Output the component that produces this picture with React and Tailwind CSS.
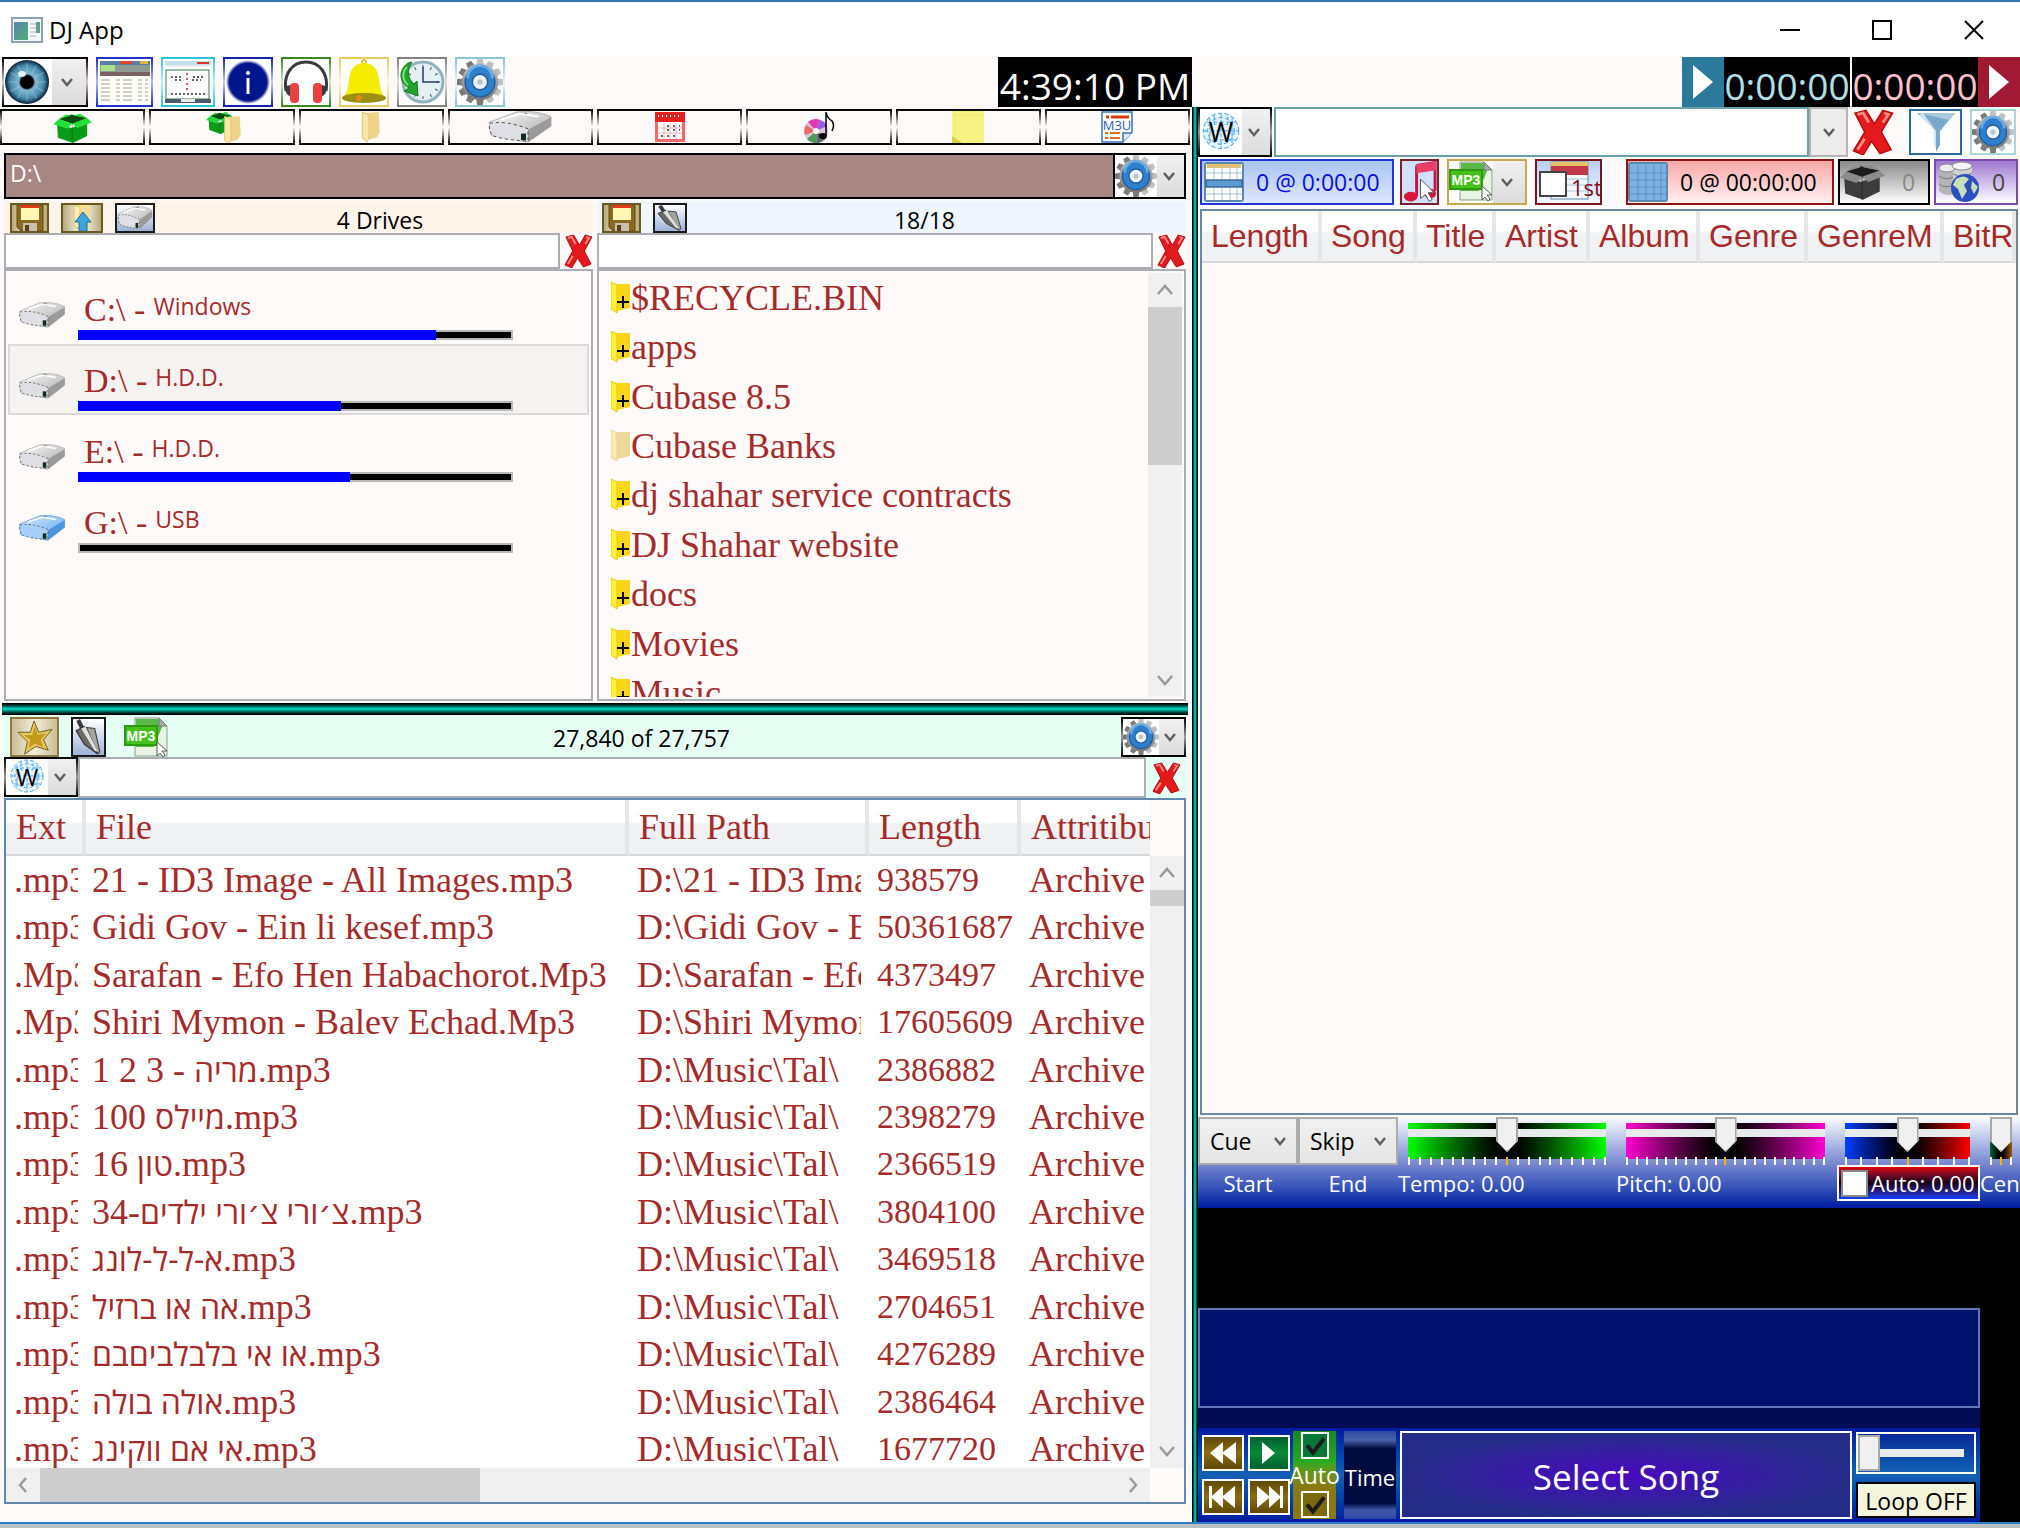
import React from "react";
import { useState } from "react";

const drives = [
  { letter: "C:\\", name: "Windows", used: 83 },
  { letter: "D:\\", name: "H.D.D.", used: 61, selected: true },
  { letter: "E:\\", name: "H.D.D.", used: 63 },
  { letter: "G:\\", name: "USB", used: 0, usb: true },
];

const folders = [
  { name: "$RECYCLE.BIN", more: true },
  { name: "apps", more: true },
  { name: "Cubase 8.5", more: true },
  { name: "Cubase Banks", more: false },
  { name: "dj shahar service contracts", more: true },
  { name: "DJ Shahar website", more: true },
  { name: "docs", more: true },
  { name: "Movies", more: true },
  { name: "Music", more: true },
];

const files = [
  [".mp3", "21 - ID3 Image - All Images.mp3", "D:\\21 - ID3 Image - All Images.mp3", "938579"],
  [".mp3", "Gidi Gov - Ein li kesef.mp3", "D:\\Gidi Gov - Ein li kesef.mp3", "50361687"],
  [".Mp3", "Sarafan - Efo Hen Habachorot.Mp3", "D:\\Sarafan - Efo Hen Habachorot.Mp3", "4373497"],
  [".Mp3", "Shiri Mymon - Balev Echad.Mp3", "D:\\Shiri Mymon - Balev Echad.Mp3", "17605609"],
  [".mp3", "1 2 3 - מריה.mp3", "D:\\Music\\Tal\\", "2386882"],
  [".mp3", "100 מיילס.mp3", "D:\\Music\\Tal\\", "2398279"],
  [".mp3", "16 טון.mp3", "D:\\Music\\Tal\\", "2366519"],
  [".mp3", "34-צ׳ורי צ׳ורי ילדים.mp3", "D:\\Music\\Tal\\", "3804100"],
  [".mp3", "א-ל-ל-לונג.mp3", "D:\\Music\\Tal\\", "3469518"],
  [".mp3", "אה או ברזיל.mp3", "D:\\Music\\Tal\\", "2704651"],
  [".mp3", "או אי בלבלביםבם.mp3", "D:\\Music\\Tal\\", "4276289"],
  [".mp3", "אולה בולה.mp3", "D:\\Music\\Tal\\", "2386464"],
  [".mp3", "אי אם ווקינג.mp3", "D:\\Music\\Tal\\", "1677720"],
];

const songColumns = [
  { name: "Length", width: "w-[120px]" },
  { name: "Song", width: "w-[95px]" },
  { name: "Title", width: "w-[79px]" },
  { name: "Artist", width: "w-[94px]" },
  { name: "Album", width: "w-[110px]" },
  { name: "Genre", width: "w-[108px]" },
  { name: "GenreM", width: "w-[136px]" },
  { name: "BitRate", width: "" },
];

/* ================= ICONS ================= */

const AppIcon = () => (
  <svg viewBox="0 0 32 26" className="h-[26px] w-8">
    <rect x="1" y="1" width="30" height="24" fill="#f4f6f8" stroke="#8fa0b0" strokeWidth="2" />
    <defs>
      <linearGradient id="appg" x1="0" y1="0" x2="1" y2="1">
        <stop offset="0" stopColor="#5c84b4" />
        <stop offset="1" stopColor="#4fae72" />
      </linearGradient>
    </defs>
    <rect x="3" y="5" width="14" height="18" fill="url(#appg)" />
    <path d="M19 7h6M19 11h6M19 15h6M19 19h6" stroke="#c4ccd2" strokeWidth="1.5" />
    <rect x="25" y="5" width="4" height="11" fill="#5fa08c" />
  </svg>
);

const EyeIcon = () => (
  <svg viewBox="0 0 48 46" className="h-[46px] w-12">
    <defs>
      <radialGradient id="iris">
        <stop offset="0.2" stopColor="#0b1520" />
        <stop offset="0.4" stopColor="#7fb6d0" />
        <stop offset="0.75" stopColor="#4a8aac" />
        <stop offset="0.92" stopColor="#1b4560" />
        <stop offset="1" stopColor="#0a1a28" />
      </radialGradient>
    </defs>
    <ellipse cx="23" cy="23" rx="22" ry="22" fill="url(#iris)" />
    {[0, 30, 60, 90, 120, 150].map((a) => (
      <path key={a} d="M23 4V14M23 32V42" stroke="#a6d2e6" strokeOpacity="0.5" transform={`rotate(${a} 23 23)`} />
    ))}
    <circle cx="23" cy="23" r="7" fill="#000" />
    <ellipse cx="18" cy="15" rx="4" ry="3" fill="#fff" fillOpacity="0.8" />
  </svg>
);

const GearIcon = ({ className }) => (
  <svg viewBox="0 0 48 48" className={className}>
    <defs>
      <linearGradient id="gearteeth" x1="0" y1="0" x2="0" y2="1">
        <stop offset="0" stopColor="#c4c4c4" />
        <stop offset="1" stopColor="#767676" />
      </linearGradient>
    </defs>
    <g fill="url(#gearteeth)">
      {[0, 30, 60, 90, 120, 150].map((a) => (
        <path key={a} d="M20 7L21 0H27L28 7V41L27 48H21L20 41Z" transform={`rotate(${a} 24 24)`} />
      ))}
      <circle cx="24" cy="24" r="19" />
    </g>
    <circle cx="24" cy="24" r="15.5" fill="#2f80cc" stroke="#1a5c9e" strokeWidth="1.5" />
    <path d="M11 20a13 13 0 0 1 26 0" fill="none" stroke="#69abe4" strokeWidth="3" />
    <circle cx="24" cy="24" r="8" fill="#eef3f8" stroke="#1f5f9f" strokeWidth="1.5" />
    <circle cx="24" cy="24" r="3" fill="#b9c6d2" />
  </svg>
);

const CrossIcon = ({ className }) => (
  <svg viewBox="0 0 30 34" preserveAspectRatio="none" className={className}>
    <path
      d="M2 3L10 1L16 11L22 1L29 3L21 17L28 30L20 33L14 24L8 34L1 31L9 17Z"
      fill="#e3191b"
      stroke="#b00c10"
      strokeWidth="1"
    />
    <path d="M4 4L8 3L12 10M23 3L26 4L22 10M4 30L9 22" fill="none" stroke="#ff8a84" strokeWidth="2" />
  </svg>
);

const Chevron = ({ className = "" }) => (
  <svg viewBox="0 0 12 10" className={`h-[10px] w-3 ${className}`}>
    <path d="M1 2L6 8L11 2" fill="none" stroke="#606060" strokeWidth="2.5" />
  </svg>
);

const ListIcon = () => (
  <svg viewBox="0 0 50 42" className="h-[42px] w-[50px]">
    <rect width="50" height="42" fill="#fbfbf7" />
    <rect width="50" height="4" fill="#5b7fa6" />
    <rect x="20" width="12" height="3" fill="#d9452e" />
    <rect x="40" width="8" height="3" fill="#e0b83a" />
    <rect y="4" width="50" height="7" fill="#8f9a92" />
    <rect x="1" y="4" width="14" height="6" fill="#a9e08a" />
    <rect y="11" width="50" height="4" fill="#7a6262" />
    <path d="M1 19H48M1 23H48M1 27H48M1 31H48M1 35H48M1 39H48" stroke="#a8a494" strokeWidth="1" strokeDasharray="9 6 4 3" />
  </svg>
);

const WindowIcon = () => (
  <svg viewBox="0 0 46 42" className="h-[42px] w-[46px]">
    <rect width="46" height="42" fill="#fff" />
    <rect width="46" height="4" fill="#bfe1ee" />
    <rect x="32" y="1" width="12" height="2" fill="#d9342e" />
    <path d="M1 5H44" stroke="#cfd8dc" />
    <rect x="1" y="9" width="43" height="29" fill="#fff" stroke="#2f7a4a" />
    <path d="M6 16H16M28 16H40M10 19H18M27 19H36M6 33H40" stroke="#333" strokeWidth="1.5" strokeDasharray="2 2" />
    <path d="M22 12V32" stroke="#c23" strokeWidth="1.5" strokeDasharray="2 3" />
    <rect y="38" width="46" height="4" fill="#4a5a6a" />
    <rect x="16" y="38" width="14" height="3" fill="#e8e8e8" />
  </svg>
);

const InfoIcon = () => (
  <svg viewBox="0 0 46 46" className="h-[46px] w-[46px]">
    <defs>
      <radialGradient id="infog">
        <stop offset="0.85" stopColor="#00148c" />
        <stop offset="1" stopColor="#00148c" stopOpacity="0" />
      </radialGradient>
    </defs>
    <circle cx="23" cy="23" r="22" fill="url(#infog)" />
    <circle cx="23" cy="14" r="2" fill="#fff" />
    <path d="M23 19V35" stroke="#fff" strokeWidth="3" />
  </svg>
);

const HeadphonesIcon = () => (
  <svg viewBox="0 0 46 46" className="h-[46px] w-[46px]">
    <path d="M3 32C0 14 10 3 23 3S46 14 43 32" fill="none" stroke="#3c3a40" strokeWidth="3" />
    <path d="M3 27Q1 35 8 38V26ZM43 27Q45 35 38 38V26Z" fill="#3c3a40" />
    <rect x="7" y="24" width="9" height="20" rx="4" fill="#ea4040" />
    <rect x="30" y="24" width="9" height="20" rx="4" fill="#ea4040" />
  </svg>
);

const BellIcon = () => (
  <svg viewBox="0 0 46 46" className="h-[46px] w-[46px]">
    <circle cx="23" cy="3" r="2" fill="none" stroke="#d8b400" strokeWidth="1.5" />
    <path d="M23 4C32 4 37 10 38 20C39 30 41 36 45 39Q23 46 1 39C5 36 7 30 8 20C9 10 14 4 23 4Z" fill="#f6ec00" />
    <ellipse cx="23" cy="39" rx="22" ry="5" fill="#9a8f0c" />
    <circle cx="18" cy="39" r="3" fill="#e08a1a" />
  </svg>
);

const HistoryIcon = () => (
  <svg viewBox="0 0 46 46" className="h-[46px] w-[46px]">
    <circle cx="24" cy="23" r="20" fill="#e4f0f4" stroke="#8fb2bc" strokeWidth="3" />
    {[0, 30, 60, 90, 120, 150].map((a) => (
      <path key={a} d="M24 6V9M24 37V40" stroke="#456" transform={`rotate(${a} 24 23)`} />
    ))}
    <path d="M24 8V23H40" fill="none" stroke="#223a66" strokeWidth="1.5" />
    <path d="M9 4C-2 12 1 24 10 29L5 32L19 37L18 22L15 25C9 20 7 12 13 3Z" fill="#1fa52c" stroke="#0f7a1a" />
    <path d="M8 8C2 14 4 22 9 26" fill="none" stroke="#7ae070" strokeWidth="2" />
  </svg>
);

const BoxShape = ({ dark, light, hole }) => (
  <>
    <path d="M4 14L20 19L38 12V28L22 36L5 30Z" fill={dark} />
    <path d="M6 9L20 4L38 8L22 15Z" fill={hole} />
    <path d="M6 9L0 15L16 20L21 14ZM38 8L43 13L27 19L21 14Z" fill={light} />
    <path d="M6 9L14 4L20 5ZM38 8L30 3L22 5Z" fill={light} />
    <path d="M21 15V36" stroke={hole} strokeOpacity="0.5" />
  </>
);

const FolderShape = () => (
  <>
    <path d="M8 2L22 1L23 22L20 27L10 30Z" fill="#eed48a" />
    <path d="M5 1L12 4V28L10 32L5 28Z" fill="#f9e7a8" stroke="#e0c470" />
  </>
);

const GreenBoxIcon = () => (
  <svg viewBox="0 0 44 36" className="h-8 w-11">
    <BoxShape dark="#0a9a1a" light="#22e038" hole="#064a0c" />
  </svg>
);

const BoxFolderIcon = () => (
  <svg viewBox="0 0 44 36" className="h-8 w-11">
    <g transform="translate(4 -1) scale(0.75)">
      <BoxShape dark="#0a9a1a" light="#22d838" hole="#064a0c" />
    </g>
    <g transform="translate(20 5)">
      <FolderShape />
    </g>
  </svg>
);

const FolderIcon = () => (
  <svg viewBox="0 0 28 33" className="h-8 w-7">
    <FolderShape />
  </svg>
);

const DriveIcon = ({ className, blue }) => (
  <svg viewBox="0 0 66 34" preserveAspectRatio="none" className={className}>
    <defs>
      <linearGradient id={blue ? "dtopb" : "dtop"} x1="0" y1="0" x2="1" y2="1">
        <stop offset="0" stopColor={blue ? "#d8ecff" : "#fdfdfd"} />
        <stop offset="1" stopColor={blue ? "#5aa4ea" : "#a4a4a4"} />
      </linearGradient>
    </defs>
    <path d="M2 12L30 1Q50 -1 64 6V16L41 33L4 26Z" fill={blue ? "url(#dtopb)" : "url(#dtop)"} stroke={blue ? "#5b9adb" : "#b0b0b0"} />
    <path d="M41 20L64 7V16L41 33Z" fill={blue ? "#4c96e0" : "#9a9a9a"} />
    <path d="M3 13Q20 10 41 19V32Q18 31 5 26Q1 18 3 13Z" fill={blue ? "#a6d0fa" : "#dedee4"} stroke="#444" strokeDasharray="3 3" />
    <path d="M34 24H39V31H34Z" fill="#122a1a" />
    <path d="M33 2H40V4H33Z" fill="#444" />
    <path d="M14 9L34 3L52 6" fill="none" stroke="#fff" strokeWidth="2" />
  </svg>
);

const CalendarIcon = () => (
  <svg viewBox="0 0 30 30" className="h-[30px] w-[30px]">
    <rect width="30" height="30" fill="#f06a6a" />
    <rect width="30" height="10" fill="#e81e1e" />
    <path d="M3 4H27" stroke="#fff" strokeWidth="2" strokeDasharray="1 3" />
    <rect x="3" y="10" width="24" height="17" fill="#fff" />
    <path d="M3 16H27M3 21H27M9 11V27M15 11V27M21 11V27" stroke="#e0b4b4" />
    <path d="M12 14H25M12 18H25M6 24H22" stroke="#333" strokeDasharray="2 4" strokeWidth="1.5" />
  </svg>
);

const DiscIcon = () => (
  <svg viewBox="0 0 32 32" className="h-8 w-8">
    <circle cx="13" cy="20" r="12" fill="#d8c6dc" />
    <path d="M13 20L5 11A12 12 0 0 1 17 9Z" fill="#e03ab8" />
    <path d="M13 20L17 9A12 12 0 0 1 24 15Z" fill="#9a5ae0" />
    <path d="M13 20L2 24A12 12 0 0 1 3 14Z" fill="#ea6a6a" />
    <path d="M13 20L14 32A12 12 0 0 1 4 28Z" fill="#4a9a5a" />
    <path d="M13 20L23 27A12 12 0 0 1 14 32Z" fill="#5a6a6a" />
    <circle cx="13" cy="20" r="3" fill="#fff" />
    <ellipse cx="20" cy="25" rx="4" ry="3" fill="#000" />
    <path d="M23 25V1Q24 7 29 10Q32 14 29 20" fill="none" stroke="#000" strokeWidth="1.5" />
  </svg>
);

const NoteIcon = () => (
  <svg viewBox="0 0 32 32" className="h-8 w-8">
    <rect width="32" height="32" fill="#f7f382" />
    <path d="M0 25L6 29L10 32H0Z" fill="#d8d040" />
    <path d="M0 4H32M3 0V26" stroke="#efe96a" />
  </svg>
);

const M3uIcon = () => (
  <svg viewBox="0 0 32 32" className="h-8 w-8">
    <path d="M1 1H31V21L22 31H1Z" fill="#fff" stroke="#3a72c0" strokeWidth="1.5" />
    <path d="M22 31V22H31" fill="#dbe8fa" stroke="#3a72c0" strokeWidth="1.5" />
    <path d="M5 6H28" stroke="#d83a10" strokeWidth="3" strokeDasharray="3 2 20" />
    <path d="M4 22H7M9 22H19M4 27H7M9 27H19" stroke="#e07018" strokeWidth="2" />
    <text x="16" y="19" textAnchor="middle" fontSize="13" fill="#2a62b0" fontFamily="Open Sans, sans-serif">M3U</text>
  </svg>
);

const FloppyIcon = () => (
  <svg viewBox="0 0 30 26" className="h-[26px] w-[30px]">
    <path d="M2 0H28V26H6L2 22Z" fill="#8a6a20" stroke="#5c4614" />
    <rect x="6" y="1" width="18" height="14" fill="#fdf6b4" />
    <rect x="6" y="0" width="18" height="3" fill="#e03a18" />
    <rect x="8" y="18" width="14" height="8" fill="#c8bfae" />
    <rect x="10" y="20" width="4" height="6" fill="#54401a" />
  </svg>
);

const UpFolderIcon = () => (
  <svg viewBox="0 0 34 26" className="h-[26px] w-[34px]">
    <path d="M9 0H25V24H11Z" fill="#f5df94" />
    <path d="M9 0L15 2V24L9 21Z" fill="#fbecb6" stroke="#dcc26a" />
    <path d="M18 7L26 17H22V26H14V17H10Z" fill="#3fa4dc" stroke="#1d6fa4" />
  </svg>
);

const TrowelIcon = ({ className }) => (
  <svg viewBox="0 0 30 34" preserveAspectRatio="none" className={className}>
    <path d="M5 1L9 9" stroke="#3a3a3a" strokeWidth="4" />
    <path d="M3 11L11 7L24 33L11 24Z" fill="#6a6a68" stroke="#2e2e2e" />
    <path d="M13 8L21 9L26 31L24 33Z" fill="#a4a4a0" stroke="#3a3a3a" />
    <path d="M8 9L12 7L24 31L21 30Z" fill="#e0e0dc" />
  </svg>
);

const StarIcon = () => (
  <svg viewBox="0 0 44 38" className="h-9 w-11">
    <path
      d="M21 2L26 14L40 11L31 22L36 33L23 29L11 37L14 24L4 14L17 14Z"
      fill="#e4c860"
      stroke="#6a5a20"
      strokeWidth="1"
    />
    <path d="M22 7L25 17L34 15L28 22L31 30L22 26L15 31L17 22L10 17L19 17Z" fill="#c69a1c" />
  </svg>
);

const Mp3Icon = () => (
  <svg viewBox="0 0 44 40" className="h-10 w-11">
    <path d="M11 1H35L43 9V39H11Z" fill="#e8f4e4" stroke="#8a9a8a" />
    <path d="M12 2H34L38 10L30 30H12Z" fill="#58b848" />
    <path d="M35 1V9H43Z" fill="#a4aaa4" stroke="#777" />
    <rect x="1" y="9" width="32" height="19" fill="#46c01c" stroke="#2c9a0c" strokeWidth="2" />
    <text x="17" y="24" textAnchor="middle" fontSize="14" fontWeight="bold" fill="#fff" fontFamily="Liberation Sans, sans-serif">MP3</text>
    <path d="M33 25V39L36 36L39 40L41 38L38 34H43Z" fill="#fff" stroke="#555" />
  </svg>
);

const GlobeW = ({ className }) => (
  <svg viewBox="0 0 38 36" className={className}>
    <circle cx="19" cy="17" r="16" fill="#eaf6ff" />
    <g fill="none" stroke="#4aaaf0" strokeDasharray="4 2">
      <circle cx="19" cy="17" r="16" />
      <circle cx="19" cy="17" r="12" />
      <path d="M3 17H35M6 9H32M6 25H32M19 1V33M13 3V11H25V4M9 6V28M29 6V28" />
    </g>
    <text x="19" y="27" textAnchor="middle" fontSize="24" fill="#000" fontFamily="Open Sans, sans-serif">W</text>
  </svg>
);

const FunnelIcon = () => (
  <svg viewBox="0 0 46 42" className="h-[42px] w-[46px]">
    <path d="M4 2H42L27 20V34L23 41V20Z" fill="#79a8cc" />
    <path d="M4 2H42L36 9Q20 5 4 2Z" fill="#a9cbe2" />
    <path d="M10 2L23 20V38L21 34V18L6 4Z" fill="#d0e4f2" />
  </svg>
);

const GridIcon = ({ filled }) => (
  <svg viewBox="0 0 40 40" className="h-10 w-10">
    <rect x="1" y="1" width="38" height="38" rx="2" fill={filled ? "#7fb2e2" : "#fff"} stroke="#5a8ab0" strokeWidth="2" />
    {!filled && <rect x="3" y="2" width="34" height="4" fill="#e8c06a" />}
    <path d="M2 11H38M2 18H38M2 25H38M2 32H38M10 3V38M18 3V38M26 3V38M33 3V38" stroke={filled ? "#5a90c6" : "#9fc4da"} />
    {!filled && <rect x="2" y="18" width="36" height="7" fill="#5b9bd0" stroke="#224f80" />}
  </svg>
);

const SongIcon = () => (
  <svg viewBox="0 0 36 42" className="h-[42px] w-9">
    <path d="M15 4L34 1V30M15 4V36" fill="none" stroke="#c81444" strokeWidth="3" />
    <path d="M15 3L35 0V9L15 12Z" fill="#e8406a" />
    <ellipse cx="9" cy="36" rx="7" ry="5" fill="#d8143c" />
    <ellipse cx="29" cy="33" rx="6" ry="5" fill="#d8143c" />
    <path d="M19 18V38L24 34L28 41L31 39L27 32H33Z" fill="#fff" stroke="#555" />
  </svg>
);

const FirstIcon = () => (
  <svg viewBox="0 0 63 42" className="absolute inset-0 h-[42px] w-[63px]">
    <rect x="14" y="1" width="37" height="37" fill="#f4f8fc" stroke="#6a88a8" />
    <rect x="14" y="1" width="37" height="4" fill="#e8c06a" />
    <rect x="14" y="5" width="37" height="9" fill="#c03a4a" />
    <path d="M26 18H51M26 24H51M26 30H51" stroke="#a8c4da" />
  </svg>
);

const DarkBoxIcon = () => (
  <svg viewBox="0 0 44 38" className="h-10 w-[46px]">
    <BoxShape dark="#3c3c3c" light="#8c8c8c" hole="#1c1c1c" />
  </svg>
);

const DatabaseIcon = () => (
  <svg viewBox="0 0 44 42" className="h-[42px] w-11">
    <path d="M3 6V30Q10 36 18 33V6Z" fill="#b4b4b4" />
    <path d="M17 4V26Q26 30 36 24V4Z" fill="#d0d0d0" />
    <ellipse cx="11" cy="7" rx="8" ry="4" fill="#eee" stroke="#888" />
    <ellipse cx="26" cy="5" rx="10" ry="4" fill="#f4f4f4" stroke="#888" />
    <path d="M3 15Q10 20 17 16M3 23Q10 28 17 24M17 13Q26 18 36 12" fill="none" stroke="#777" />
    <circle cx="29" cy="27" r="14" fill="#2b4fc0" />
    <path d="M20 18Q28 13 33 18L28 24L31 30L26 38L22 28L17 24ZM36 20L42 26L38 33L35 27Z" fill="#c8e0b8" />
  </svg>
);

/* ================= SMALL PARTS ================= */

const SplitButton = ({ label, className, children }) => (
  <button aria-label={label} className={`flex shrink-0 items-stretch border-2 bg-white ${className}`}>
    {children}
    <span className="flex flex-1 items-center justify-center bg-gradient-to-b from-[#f0f0f0] to-[#dcdcdc] pr-1">
      <Chevron />
    </span>
  </button>
);

const ToolButton = ({ label, className, children }) => (
  <button aria-label={label} className={`flex shrink-0 items-center justify-center overflow-hidden border-2 ${className}`}>
    {children}
  </button>
);

const ScrollArrow = ({ d, label, className }) => (
  <button aria-label={label} className={`flex shrink-0 items-center justify-center ${className}`}>
    <svg viewBox="0 0 16 16" className="h-4 w-4">
      <path d={d} fill="none" stroke="#9a9a9a" strokeWidth="2.5" />
    </svg>
  </button>
);

const UP = "M1 12L8 4L15 12";
const DOWN = "M1 4L8 12L15 4";
const LEFT = "M11 1L5 8L11 15";
const RIGHT = "M5 1L11 8L5 15";

// Hebrew runs use the interface face, everything else the list face
const FileName = ({ text }) =>
  text.split(/([\u05d0-\u05f4][\u05d0-\u05f4 -]*)/).map((part, i) =>
    i % 2 ? (
      <span key={i} className="font-['Open_Sans','DejaVu_Sans',sans-serif] text-[32px] leading-none">
        {part}
      </span>
    ) : (
      part
    )
  );

const DeckSlider = ({ label, band, ticks, bare }) => {
  const [value, setValue] = useState(50);
  return (
    <div className="grid h-12 px-[10px]">
      <div className={`mt-[6px] h-9 [grid-area:1/1] ${band}`}></div>
      <div className="flex h-2 items-stretch justify-between self-end [grid-area:1/1]">
        {Array.from({ length: ticks }, (_, i) => (
          <i key={i} className={i === (ticks - 1) / 2 ? "w-[2px] bg-[#ffb400]" : "w-[2px] bg-white"}></i>
        ))}
      </div>
      <input
        type="range"
        aria-label={label}
        value={value}
        onChange={(e) => setValue(e.target.value)}
        className={`h-8 w-full min-w-[22px] appearance-none bg-transparent [grid-area:1/1] [&::-webkit-slider-runnable-track]:h-2 [&::-webkit-slider-thumb]:mt-[-12px] [&::-webkit-slider-thumb]:h-[35px] [&::-webkit-slider-thumb]:w-[22px] [&::-webkit-slider-thumb]:appearance-none [&::-webkit-slider-thumb]:border-2 [&::-webkit-slider-thumb]:border-[#a8a8a8] [&::-webkit-slider-thumb]:bg-[#f0f0f0] [&::-webkit-slider-thumb]:[clip-path:polygon(0_0,100%_0,100%_68%,50%_100%,0_68%)] ${bare ? "" : "[&::-webkit-slider-runnable-track]:bg-[#e7eaea]"}`}
      />
    </div>
  );
};

const DeckButton = ({ label, className, d }) => (
  <button
    aria-label={label}
    className={`flex h-9 w-[42px] items-center justify-center border-2 border-white ${className}`}
  >
    <svg viewBox="0 0 34 28" className="h-7 w-[34px]">
      <path d={d} fill="#fff" />
    </svg>
  </button>
);

const CheckMark = ({ label, className }) => (
  <span className="grid h-[27px] w-7">
    <input
      type="checkbox"
      defaultChecked
      aria-label={label}
      className={`h-full w-full appearance-none border-2 border-white [grid-area:1/1] ${className}`}
    />
    <svg viewBox="0 0 28 26" className="pointer-events-none h-full w-full [grid-area:1/1]">
      <path d="M6 13L12 20L23 6" fill="none" stroke="#1c1c1c" strokeWidth="4" />
    </svg>
  </span>
);

/* ================= LEFT SIDE ================= */

const TopToolbar = () => (
  <div className="flex h-[50px] items-stretch gap-2 pl-[2px]">
    <SplitButton label="View" className="w-[86px] [border-image:linear-gradient(#000,#ccc,#000)_1]">
      <EyeIcon />
    </SplitButton>
    <ToolButton label="List view" className="w-[57px] bg-white [border-image:linear-gradient(#2030c8,#b0b8f8,#2030c8)_1]">
      <ListIcon />
    </ToolButton>
    <ToolButton label="Window view" className="w-[54px] bg-white [border-image:linear-gradient(#2cc4d8,#b8f0f8,#2cc4d8)_1]">
      <WindowIcon />
    </ToolButton>
    <ToolButton label="Information" className="w-[50px] bg-white [border-image:linear-gradient(#1420a0,#c8ccf0,#1420a0)_1]">
      <InfoIcon />
    </ToolButton>
    <ToolButton label="Headphones" className="w-[50px] bg-white [border-image:linear-gradient(#3a8420,#d0e8c8,#3a8420)_1]">
      <HeadphonesIcon />
    </ToolButton>
    <ToolButton label="Alerts" className="w-[50px] bg-white [border-image:linear-gradient(#ecc860,#fff4d8,#ecc860)_1]">
      <BellIcon />
    </ToolButton>
    <ToolButton label="History" className="w-[50px] bg-white [border-image:linear-gradient(#808080,#e0e0e0,#808080)_1]">
      <HistoryIcon />
    </ToolButton>
    <ToolButton label="Settings" className="w-[50px] bg-white [border-image:linear-gradient(#88c4d0,#e8f8fa,#88c4d0)_1]">
      <GearIcon className="h-[46px] w-[46px]" />
    </ToolButton>
    <time className="ml-auto w-[194px] whitespace-nowrap bg-black text-center text-[37px] leading-[58px] text-white">
      4:39:10 PM
    </time>
  </div>
);

const sources = [
  { label: "Library", icon: <GreenBoxIcon /> },
  { label: "Library folders", icon: <BoxFolderIcon /> },
  { label: "Folders", icon: <FolderIcon /> },
  { label: "Drives", icon: <DriveIcon className="h-8 w-[66px]" /> },
  { label: "Calendar", icon: <CalendarIcon /> },
  { label: "Discs", icon: <DiscIcon /> },
  { label: "Notes", icon: <NoteIcon /> },
  { label: "Playlists", icon: <M3uIcon /> },
];

const SourceBar = () => (
  <div className="mt-[2px] grid h-9 grid-cols-8 gap-1 pr-[2px]">
    {sources.map((s) => (
      <ToolButton key={s.label} label={s.label} className="[border-image:linear-gradient(#000,#fff,#000)_1]">
        {s.icon}
      </ToolButton>
    ))}
  </div>
);

const gold = "h-[30px] bg-gradient-to-r from-[#b8a878] via-white to-[#b8a878] border-[#6a5a20]";
const steel = "h-[30px] bg-gradient-to-b from-white to-[#9eb2d8] border-[#1a1a1a]";

const SearchLine = ({ label }) => (
  <div className="flex h-9">
    <input aria-label={label} className="min-w-0 flex-1 border-2 border-[#abadb3] bg-white px-1 text-[23px] outline-none" />
    <button aria-label="Clear" className="flex w-[33px] items-center justify-end">
      <CrossIcon className="h-[34px] w-[29px]" />
    </button>
  </div>
);

const DrivesPane = () => (
  <section className="flex min-h-0 min-w-0 flex-col">
    <div className="flex h-8 items-end gap-3 bg-[#fff4e9] pl-[6px]">
      <ToolButton label="Save" className={`w-[39px] ${gold}`}>
        <FloppyIcon />
      </ToolButton>
      <ToolButton label="Up one folder" className={`w-[42px] ${gold}`}>
        <UpFolderIcon />
      </ToolButton>
      <ToolButton label="All drives" className={`w-10 ${steel}`}>
        <DriveIcon className="h-6 w-9" />
      </ToolButton>
      <h2 className="flex-1 text-center text-[23px] leading-[26px]">4 Drives</h2>
    </div>
    <SearchLine label="Search drives" />
    <ul className="min-h-0 flex-1 overflow-hidden border-2 border-[#abadb3] bg-[#fffafa] px-[2px] pt-[2px] text-[#a52a2a]">
      {drives.map((d) => (
        <li
          key={d.letter}
          className={`flex h-[71px] items-end border-2 pb-[2px] pl-2 ${d.selected ? "border-[#dadada] bg-[#f5f2f2]" : "border-transparent"}`}
        >
          <DriveIcon className="mb-3 h-[26px] w-12" blue={d.usb} />
          <div className="ml-3">
            <p className="flex items-baseline gap-2 pl-[6px] leading-9">
              <span className="font-['Liberation_Serif',serif] text-[34px]">{d.letter} -</span>
              <span className="-translate-y-[6px] text-[23px]">{d.name}</span>
            </p>
            <div className="h-[10px] w-[435px] border-2 border-[#b8b8b8] bg-black">
              <div className="-mx-[2px] -mt-[2px] h-[10px] bg-[#0000ff]" style={{ width: `${d.used}%` }}></div>
            </div>
          </div>
        </li>
      ))}
    </ul>
  </section>
);

const FoldersPane = () => (
  <section className="flex min-h-0 min-w-0 flex-col">
    <div className="flex h-8 items-end gap-3 bg-[#eff6ff] pl-[5px]">
      <ToolButton label="Save" className={`w-[39px] ${gold}`}>
        <FloppyIcon />
      </ToolButton>
      <ToolButton label="Clean" className={`w-[34px] ${steel}`}>
        <TrowelIcon className="h-[26px] w-[30px]" />
      </ToolButton>
      <h2 className="flex-1 pr-[36px] text-center text-[23px] leading-[26px]">18/18</h2>
    </div>
    <SearchLine label="Search folders" />
    <div className="flex min-h-0 flex-1 items-start overflow-hidden border-2 border-[#abadb3] bg-[#fffafa] p-[2px]">
      <div className="h-full min-w-0 flex-1 overflow-hidden">
        <ul className="flex h-[445px] flex-col pl-[10px] font-['Liberation_Serif',serif] text-[36px] leading-[48px] text-[#a52a2a]">
          {folders.map((f) => (
            <li key={f.name} className="flex flex-1 items-center">
              <svg viewBox="0 0 20 32" className="h-8 w-5 shrink-0">
                <path d="M5 2L19 2V26L6 29Z" fill={f.more ? "#fcd41c" : "#ecd898"} />
                <path d="M0 0L6 3V31L0 27Z" fill={f.more ? "#fff23a" : "#f9ecb8"} stroke={f.more ? "#e8c800" : "#e4d290"} />
                {f.more && <path d="M6 20H18M12 14V26" stroke="#000" strokeWidth="2" />}
              </svg>
              <span className="whitespace-nowrap">{f.name}</span>
            </li>
          ))}
        </ul>
      </div>
      <div className="flex h-full w-[34px] flex-col bg-[#f0f0f0]">
        <ScrollArrow d={UP} label="Scroll up" className="h-[34px]" />
        <div className="h-[158px] bg-[#cdcdcd]"></div>
        <ScrollArrow d={DOWN} label="Scroll down" className="mt-auto h-[34px]" />
      </div>
    </div>
  </section>
);

const headCell =
  "border-b-2 border-r-4 border-b-[#d8d8d8] border-r-[#e6e6e8] p-0 text-left font-normal bg-gradient-to-b from-white from-40% to-[#f0f1f3] to-45% overflow-hidden whitespace-nowrap";

const FilesPane = () => (
  <section className="flex min-h-0 flex-col bg-[#e6fff5] pt-[2px]">
    <div className="flex h-10 items-stretch pl-[6px]">
      <ToolButton label="Favourites" className="w-[49px] border-[#8a7a40] bg-gradient-to-r from-[#cbbd94] via-[#f4eeda] to-[#cbbd94]">
        <StarIcon />
      </ToolButton>
      <ToolButton label="Clean" className="ml-3 w-[35px] border-[#1a1a1a] bg-gradient-to-b from-white to-[#9eb2d8]">
        <TrowelIcon className="h-9 w-[31px]" />
      </ToolButton>
      <button aria-label="MP3 files" className="ml-[18px]">
        <Mp3Icon />
      </button>
      <h2 className="flex-1 pr-[6px] text-center text-[23px] leading-[42px]">27,840 of 27,757</h2>
      <SplitButton label="List settings" className="w-[65px] [border-image:linear-gradient(#000,#999,#000)_1]">
        <GearIcon className="h-9 w-9" />
      </SplitButton>
    </div>
    <div className="flex h-[41px]">
      <SplitButton label="Search the web" className="h-10 w-[74px] [border-image:linear-gradient(#000,#999,#000)_1]">
        <GlobeW className="h-9 w-[42px]" />
      </SplitButton>
      <input aria-label="Search files" className="min-w-0 flex-1 border-2 border-[#abadb3] bg-white px-1 text-[23px] outline-none" />
      <button aria-label="Clear" className="flex w-10 items-center justify-center">
        <CrossIcon className="h-8 w-[29px]" />
      </button>
    </div>
    <div className="flex min-h-0 flex-1 flex-col border-2 border-[#6288b0] bg-[#fffafa]">
      <div className="flex min-h-0 flex-1">
        <div className="min-w-0 flex-1 overflow-hidden bg-white">
          <table className="h-[673px] w-full table-fixed border-separate border-spacing-0 font-['Liberation_Serif',serif] text-[36px] leading-10 text-[#a52a2a]">
            <thead>
              <tr className="h-14">
                <th className={`w-[80px] pl-[10px]! ${headCell}`}>Ext</th>
                <th className={`pl-[10px]! ${headCell}`}>File</th>
                <th className={`w-[240px] pl-[10px]! ${headCell}`}>Full Path</th>
                <th className={`w-[152px] pl-[10px]! ${headCell}`}>Length</th>
                <th className={`w-[129px] border-r-0! pl-[10px]! ${headCell}`}>Attritibutes</th>
              </tr>
            </thead>
            <tbody>
              {files.map(([ext, name, path, size]) => (
                <tr key={name}>
                  <td className="px-2 py-0">
                    <div className="h-10 overflow-hidden">{ext}</div>
                  </td>
                  <td className="px-[6px] py-0">
                    <div className="h-10 overflow-hidden whitespace-nowrap">
                      <FileName text={name} />
                    </div>
                  </td>
                  <td className="px-2 py-0">
                    <div className="h-10 overflow-hidden whitespace-nowrap">{path}</div>
                  </td>
                  <td className="py-0 pl-2 pr-0 text-[34px]">{size}</td>
                  <td className="py-0 pl-2 pr-0">Archive</td>
                </tr>
              ))}
            </tbody>
          </table>
        </div>
        <div className="flex w-[34px] flex-col pt-14">
          <div className="flex min-h-0 flex-1 flex-col bg-[#f0f0f0]">
            <ScrollArrow d={UP} label="Scroll up" className="h-[34px]" />
            <div className="h-4 bg-[#cdcdcd]"></div>
            <ScrollArrow d={DOWN} label="Scroll down" className="mt-auto h-[34px]" />
          </div>
        </div>
      </div>
      <div className="mr-[34px] flex h-[34px] bg-[#f0f0f0]">
        <ScrollArrow d={LEFT} label="Scroll left" className="w-[34px]" />
        <div className="w-[440px] bg-[#cdcdcd]"></div>
        <ScrollArrow d={RIGHT} label="Scroll right" className="ml-auto w-[34px]" />
      </div>
    </div>
  </section>
);

const Browser = () => (
  <div className="flex min-h-0 min-w-0 flex-col">
    <TopToolbar />
    <SourceBar />
    <div className="grid min-h-0 flex-1 grid-rows-[550fr_12px_789fr] pb-[18px] pl-1 pr-[6px] pt-2">
      <div className="flex min-h-0 flex-col pb-[2px]">
        <div className="flex h-[46px] border-2 border-black bg-[#a88684]">
          <p className="flex-1 pl-[4px] text-[23px] leading-9 text-white">D:\</p>
          <SplitButton label="Path settings" className="w-[71px] border-y-0 border-r-0 border-black">
            <GearIcon className="h-[42px] w-[42px]" />
          </SplitButton>
        </div>
        <div className="mt-[2px] grid min-h-0 flex-1 grid-cols-2 gap-1">
          <DrivesPane />
          <FoldersPane />
        </div>
      </div>
      <div className="-mx-[2px] bg-gradient-to-b from-black via-[#00e0cc] to-black"></div>
      <FilesPane />
    </div>
  </div>
);

/* ================= RIGHT SIDE ================= */

const PlayFlag = ({ className, label }) => (
  <button aria-label={label} className={`flex w-[42px] items-center justify-center ${className}`}>
    <svg viewBox="0 0 20 34" className="h-[34px] w-5">
      <path d="M0 0L20 17L0 34Z" fill="#fff" />
    </svg>
  </button>
);

const Playlist = () => (
  <div className="flex min-h-0 flex-1 flex-col">
    <div className="flex h-[50px] items-stretch pr-1">
      <SplitButton label="Search the web" className="w-[74px] [border-image:linear-gradient(#000,#999,#000)_1]">
        <GlobeW className="h-[46px] w-[42px]" />
      </SplitButton>
      <input aria-label="Search songs" className="ml-[2px] min-w-0 flex-1 border-2 border-[#6ba0a8] bg-white px-2 text-[23px] outline-none" />
      <button aria-label="Search history" className="flex w-[39px] items-center justify-center border-2 border-[#b4b4b4] bg-[#ececec]">
        <Chevron />
      </button>
      <button aria-label="Clear" className="ml-[3px] flex w-11 items-center justify-center">
        <CrossIcon className="h-[46px] w-[42px]" />
      </button>
      <ToolButton label="Filter" className="my-[2px] ml-[14px] w-[53px] border-[#2a6a9c] bg-white">
        <FunnelIcon />
      </ToolButton>
      <ToolButton label="Settings" className="my-[2px] ml-2 w-[46px] border-[#a8d4dc] bg-white">
        <GearIcon className="h-[42px] w-[42px]" />
      </ToolButton>
    </div>
    <div className="my-[2px] flex h-[46px] items-stretch px-[2px] text-[23px]">
      <button className="flex w-[194px] items-center gap-3 whitespace-nowrap border-2 border-[#2038d8] bg-gradient-to-b from-[#a8c4f4] to-[#dfe8fc] pl-[2px] text-[#0a10d8]">
        <GridIcon />
        <span>0 @ 0:00:00</span>
      </button>
      <ToolButton label="Song" className="ml-[6px] w-[39px] border-[#7c2030] bg-[#cfe0f8]">
        <SongIcon />
      </ToolButton>
      <SplitButton label="MP3" className="ml-2 w-20 border-[#c8a850]">
        <Mp3Icon />
      </SplitButton>
      <label className="relative ml-2 flex w-[67px] items-end border-2 border-[#7c1420] bg-gradient-to-b from-[#b8d0f4] to-[#f4f8ff] pb-1">
        <FirstIcon />
        <input type="checkbox" className="relative mb-[2px] ml-[2px] h-[26px] w-7 shrink-0 appearance-none border-2 border-[#444] bg-white" />
        <span className="relative ml-[4px] text-[22px] leading-6 text-[#7a1020]">1st</span>
      </label>
      <button className="ml-auto flex w-[208px] items-center gap-3 whitespace-nowrap border-2 border-[#8c1414] bg-gradient-to-b from-[#f8a8a8] to-[#fff0f0] text-black">
        <GridIcon filled />
        <span>0 @ 00:00:00</span>
      </button>
      <button className="ml-1 flex w-[92px] items-center gap-4 border-2 border-black bg-gradient-to-b from-[#8a8a8a] to-white text-[#888]">
        <DarkBoxIcon />
        <span>0</span>
      </button>
      <button className="ml-1 flex w-[84px] items-center gap-3 border-2 border-[#7a4cb0] bg-gradient-to-b from-[#a078d0] to-white text-[#444]">
        <DatabaseIcon />
        <span>0</span>
      </button>
    </div>
    <div className="mx-[2px] mt-[2px] min-h-0 flex-1 overflow-hidden border-2 border-[#6a88a4] bg-[#fffafa]">
      <table className="w-full table-fixed border-separate border-spacing-0 font-['Liberation_Sans',sans-serif] text-[32px] text-[#a52a2a]">
        <thead>
          <tr className="h-[52px]">
            {songColumns.map((c) => (
              <th key={c.name} className={`${c.width} pl-[9px]! ${headCell}`}>
                {c.name}
              </th>
            ))}
          </tr>
        </thead>
      </table>
    </div>
  </div>
);

const DeckSelect = ({ name }) => (
  <div className="grid h-12">
    <select
      aria-label={name}
      className="w-full appearance-none border-2 border-[#acacac] bg-gradient-to-b from-[#f0f0f0] to-[#e5e5e5] pl-[10px] text-[23px] text-black [grid-area:1/1]"
    >
      <option>{name}</option>
    </select>
    <Chevron className="pointer-events-none mr-3 self-center justify-self-end [grid-area:1/1]" />
  </div>
);

const Deck = () => (
  <div className="mt-px">
    <div className="grid h-[92px] grid-cols-[100px_100px_218fr_219fr_145fr_40px] overflow-hidden bg-gradient-to-b from-white via-[#7080cc] via-55% to-[#0018a0] pt-px text-[22px] leading-9 text-white">
      <div>
        <DeckSelect name="Cue" />
        <p className="text-center">Start</p>
      </div>
      <div>
        <DeckSelect name="Skip" />
        <p className="text-center">End</p>
      </div>
      <div>
        <DeckSlider label="Tempo" ticks={19} band="bg-gradient-to-r from-[#00ff00] via-black to-[#00ff00]" />
        <p>Tempo: 0.00</p>
      </div>
      <div>
        <DeckSlider label="Pitch" ticks={21} band="bg-gradient-to-r from-[#ff00d0] via-black to-[#ff00d0]" />
        <p>Pitch: 0.00</p>
      </div>
      <div>
        <DeckSlider label="Balance" ticks={9} band="bg-gradient-to-r from-[#0040ff] via-black to-[#ff0000]" />
        <label className="ml-[2px] flex h-9 items-center whitespace-nowrap border-2 border-white bg-gradient-to-b from-[#e00000] via-[#180018] to-[#0040ff]">
          <input type="checkbox" className="ml-[2px] h-[27px] w-[27px] shrink-0 appearance-none border-2 border-[#888] bg-white" />
          <span className="ml-[3px]">Auto: 0.00</span>
        </label>
      </div>
      <div>
        <DeckSlider label="Center" ticks={3} bare band="bg-gradient-to-r from-[#006840] via-black to-[#a06000]" />
        <p className="overflow-hidden">Center</p>
      </div>
    </div>
    <div className="grid grid-cols-[1fr_40px] bg-black pt-[100px]">
      <div className="bg-[#000c54]">
        <div className="h-[100px] border-2 border-[#6474b8] bg-[#00126c]"></div>
        <div className="mt-5 flex h-[94px] items-stretch bg-gradient-to-b from-[#0018a0] via-[#1560b4] to-[#0018a0] py-[3px] pl-1 pr-1 text-[23px] text-white">
          <div className="grid grid-cols-2 content-center gap-x-1 gap-y-2">
            <DeckButton
              label="Rewind"
              d="M17 3V25L4 14ZM30 3V25L16 14Z"
              className="bg-gradient-to-b from-[#604808] via-[#8a6c10] to-[#604808]"
            />
            <DeckButton label="Play" d="M10 3L23 14L10 25Z" className="bg-gradient-to-b from-[#006030] via-[#0a8a38] to-[#006030]" />
            <DeckButton
              label="Previous"
              d="M3 3H6V13L17 3V13L29 3V25L17 15V25L6 15V25H3Z"
              className="bg-gradient-to-b from-[#604808] via-[#8a6c10] to-[#604808]"
            />
            <DeckButton
              label="Next"
              d="M31 3H28V13L17 3V13L5 3V25L17 15V25L28 15V25H31Z"
              className="bg-gradient-to-b from-[#604808] via-[#8a6c10] to-[#604808]"
            />
          </div>
          <div className="ml-[3px] flex w-[43px] flex-col items-center justify-between bg-gradient-to-b from-[#108a20] via-[#2aa820] via-35% to-[#8a7810] to-65% py-px">
            <CheckMark label="Auto play" className="bg-[#087838]" />
            <span className="whitespace-nowrap leading-6">Auto</span>
            <CheckMark label="Auto skip" className="bg-[#7c6a10]" />
          </div>
          <button className="ml-2 flex w-[52px] items-center justify-center bg-[linear-gradient(#2c48a0,#4a60a8_10%,#000c40_20%,#000c40_82%,#4058a8_90%,#2c48a0)] pt-1 text-[22px]">
            Time
          </button>
          <button className="ml-1 flex-1 border-2 border-white bg-[radial-gradient(closest-side,#4a0ac0,#242c88)] pt-1 text-[35px]">
            Select Song
          </button>
          <div className="ml-1 flex w-[120px] flex-col justify-between py-px">
            <div className="flex h-[42px] items-center border-2 border-white bg-gradient-to-b from-[#0a2898] to-[#1560b4] pr-[10px]">
              <input
                type="range"
                aria-label="Loop length"
                defaultValue="0"
                className="h-9 w-full appearance-none bg-transparent [&::-webkit-slider-runnable-track]:h-2 [&::-webkit-slider-runnable-track]:bg-[#e7eaea] [&::-webkit-slider-thumb]:mt-[-14px] [&::-webkit-slider-thumb]:h-9 [&::-webkit-slider-thumb]:w-[22px] [&::-webkit-slider-thumb]:appearance-none [&::-webkit-slider-thumb]:border-2 [&::-webkit-slider-thumb]:border-[#a8a8a8] [&::-webkit-slider-thumb]:bg-[#f0f0f0]"
              />
            </div>
            <button className="h-9 border-2 border-black bg-[#f5f5dc] pt-px leading-8 text-black">Loop OFF</button>
          </div>
        </div>
      </div>
    </div>
  </div>
);

const Player = () => (
  <div className="flex min-h-0 min-w-0 flex-col overflow-hidden bg-[#fffafa]">
    <div className="flex h-[50px] items-stretch justify-end text-[37px] leading-[58px]">
      <PlayFlag label="Play elapsed" className="bg-[#2b7a9c]" />
      <span className="w-[126px] bg-black text-center text-[#b0e0e6]">0:00:00</span>
      <span className="ml-[2px] w-[126px] bg-black text-center text-[#ffc0cb]">0:00:00</span>
      <PlayFlag label="Play remaining" className="bg-[#a01a34]" />
    </div>
    <Playlist />
    <Deck />
  </div>
);

/* ================= WINDOW ================= */

const App = () => {
  return (
    <div className="flex h-screen flex-col overflow-hidden border-t-2 border-[#2f76b0] bg-[#b8c0c0] font-['Open_Sans','Noto_Sans',sans-serif] text-black">
      <header className="flex h-[55px] shrink-0 items-center bg-white pl-[11px]">
        <AppIcon />
        <h1 className="ml-[6px] flex-1 text-[24px]">DJ App</h1>
        <button aria-label="Minimize" className="flex h-full w-[92px] items-center justify-center">
          <svg viewBox="0 0 20 20" className="h-5 w-5">
            <path d="M0 10H20" stroke="#000" strokeWidth="2" />
          </svg>
        </button>
        <button aria-label="Maximize" className="flex h-full w-[92px] items-center justify-center">
          <svg viewBox="0 0 20 20" className="h-5 w-5">
            <rect x="1" y="1" width="18" height="18" fill="none" stroke="#000" strokeWidth="2" />
          </svg>
        </button>
        <button aria-label="Close" className="flex h-full w-[92px] items-center justify-center">
          <svg viewBox="0 0 20 20" className="h-5 w-5">
            <path d="M1 1L19 19M19 1L1 19" stroke="#000" strokeWidth="2" />
          </svg>
        </button>
      </header>
      <main className="mb-1 grid min-h-0 flex-1 grid-cols-[1192fr_6px_822fr] grid-rows-[minmax(0,1fr)] border-b-2 border-[#2f7cc8] bg-[#fffafa]">
        <Browser />
        <div className="mt-[50px] bg-gradient-to-r from-black via-[#00e0cc] to-black"></div>
        <Player />
      </main>
    </div>
  );
};

export default App;
